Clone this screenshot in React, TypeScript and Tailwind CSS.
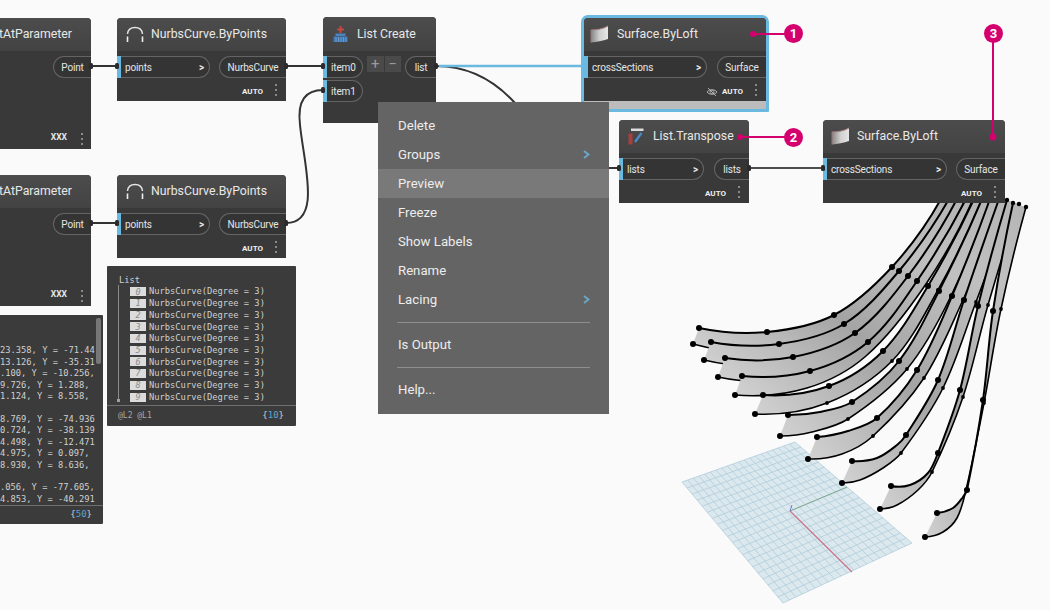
import React from "react";

type P = [number, number];

function tangents(pts: P[]) {
  const d = pts.slice(0, -1).map((p, i) => Math.hypot(pts[i + 1][0] - p[0], pts[i + 1][1] - p[1]));
  const m: P[] = pts.map((_, i) => {
    if (i === 0 || i === pts.length - 1) return [0, 0];
    const s = d[i - 1] + d[i];
    return [(pts[i + 1][0] - pts[i - 1][0]) / s, (pts[i + 1][1] - pts[i - 1][1]) / s];
  });
  const n = pts.length - 1;
  m[0] = [(2 * (pts[1][0] - pts[0][0])) / d[0] - m[1][0], (2 * (pts[1][1] - pts[0][1])) / d[0] - m[1][1]];
  m[n] = [(2 * (pts[n][0] - pts[n - 1][0])) / d[n - 1] - m[n - 1][0], (2 * (pts[n][1] - pts[n - 1][1])) / d[n - 1] - m[n - 1][1]];
  return { d, m };
}

function segs(pts: P[]): string {
  const { d, m } = tangents(pts);
  let s = "";
  for (let i = 0; i < pts.length - 1; i++) {
    const k = d[i] / 3;
    const a = pts[i];
    const b = pts[i + 1];
    s += ` C${(a[0] + m[i][0] * k).toFixed(1)},${(a[1] + m[i][1] * k).toFixed(1)} ${(b[0] - m[i + 1][0] * k).toFixed(1)},${(b[1] - m[i + 1][1] * k).toFixed(1)} ${b[0]},${b[1]}`;
  }
  return s;
}
const spline = (pts: P[]) => `M${pts[0][0]},${pts[0][1]}` + segs(pts);
const back = (pts: P[]) => {
  const r = [...pts].reverse();
  return `L${r[0][0]},${r[0][1]}` + segs(r);
};

const upper: P[][] = [
  [[699, 328], [767, 332], [834, 315], [892, 267], [941, 199]],
  [[711, 342], [779, 344], [844, 324], [899, 271], [949, 199]],
  [[725, 358], [793, 357], [855, 333], [908, 276], [957, 199]],
  [[742, 376], [810, 371], [868, 342], [917, 281], [966, 199]],
  [[763, 395], [829, 386], [883, 351], [928, 286], [974, 199]],
  [[788, 415], [852, 402], [899, 361], [939, 291], [982, 199]],
  [[817, 437], [877, 418], [917, 370], [952, 296], [990, 199]],
  [[852, 461], [906, 435], [938, 380], [964, 300], [999, 199]],
  [[891, 486], [938, 453], [960, 390], [978, 306], [1007, 200]],
  [[937, 513], [967, 490], [983, 400], [993, 311], [1013, 203]],
];
const lower: P[][] = [
  [[693, 344], [765, 352], [835, 336], [898, 282], [950, 197]],
  [[704, 360], [778, 365], [850, 344], [906, 286], [958, 197]],
  [[718, 377], [795, 379], [865, 352], [917, 292], [966, 197]],
  [[735, 395], [807, 388], [866, 356], [926, 284], [974, 197]],
  [[755, 414], [827, 403], [892, 361], [938, 290], [983, 197]],
  [[780, 436], [848, 419], [907, 369], [951, 296], [991, 197]],
  [[808, 459], [873, 436], [924, 378], [963, 300], [1007, 200]],
  [[842, 483], [901, 453], [943, 388], [976, 302], [1013, 203]],
  [[880, 509], [932, 472], [963, 397], [988, 305], [1019, 204]],
  [[925, 537], [966, 490], [984, 403], [1001, 309], [1026, 207]],
];
const upperBend: Record<number, P[]> = {
  5: [[820, 412]],
  6: [[848, 431]],
  7: [[877, 458], [897, 445]],
  8: [[910, 485], [928, 473]],
  9: [[953, 508], [963, 497]],
};
const lowerBend: Record<number, P[]> = {
  5: [[812, 432]],
  6: [[842, 454]],
  7: [[860, 480], [883, 468]],
  8: [[897, 505], [918, 490]],
  9: [[943, 532], [957, 518]],
};
const path = (c: P[], bend?: P[]) => (bend ? [c[0], ...bend, ...c.slice(1)] : c);

const A: P = [795, 442];
const B: P = [682, 482];
const C: P = [783, 603];
const D: P = [912, 543];
const lerp = (a: P, b: P, t: number): P => [a[0] + (b[0] - a[0]) * t, a[1] + (b[1] - a[1]) * t];
const cells = Array.from({ length: 21 }, (_, i) => i / 20);

function LoftDrawing() {
  return (
    <svg className="absolute left-0 top-0" width="1050" height="610" viewBox="0 0 1050 610">
      <defs>
        <linearGradient id="rib" x1="0" y1="1" x2="1" y2="0">
          <stop offset="0" stopColor="#d2d2d2" />
          <stop offset="0.4" stopColor="#a4a4a4" />
          <stop offset="0.75" stopColor="#c0c0c0" />
          <stop offset="1" stopColor="#b4b4b4" />
        </linearGradient>
      </defs>
      <polygon points={[A, B, C, D].map((p) => p.join(",")).join(" ")} fill="#dbe8ee" />
      {cells.map((t) => {
        const a = lerp(A, B, t);
        const b = lerp(D, C, t);
        const c = lerp(A, D, t);
        const d = lerp(B, C, t);
        return (
          <g key={t} stroke="#b0cdda" strokeWidth="0.8">
            <line x1={a[0]} y1={a[1]} x2={b[0]} y2={b[1]} />
            <line x1={c[0]} y1={c[1]} x2={d[0]} y2={d[1]} />
          </g>
        );
      })}
      <line x1="790" y1="511" x2="847" y2="487" stroke="#7fa98c" strokeWidth="1" />
      <line x1="790" y1="511" x2="852" y2="572" stroke="#c9768c" strokeWidth="1.3" />
      <line x1="790" y1="511" x2="792" y2="505" stroke="#6f7fd0" strokeWidth="1" />
      {upper.map((u, i) => {
        const top = path(u, upperBend[i]);
        const bot = path(lower[i], lowerBend[i]);
        return (
          <g key={i}>
            <path d={spline(top) + " " + back(bot) + " Z"} fill="url(#rib)" />
            <path d={spline(bot)} fill="none" stroke="#000" strokeWidth="1.6" />
            <path d={spline(top)} fill="none" stroke="#000" strokeWidth="2" />
          </g>
        );
      })}
      {upper.map((u, i) =>
        u.slice(0, 4).map((p, j) => <circle key={`u${i}${j}`} cx={p[0]} cy={p[1]} r="3" fill="#000" />)
      )}
      {lower.map((u, i) =>
        u.slice(0, i < 4 ? 1 : 4).map((p, j) => <circle key={`l${i}${j}`} cx={p[0]} cy={p[1]} r={j === 0 ? 3 : 1.9} fill="#000" />)
      )}
      {[[1007, 200], [1013, 203], [1019, 204], [1026, 207]].map((p) => (
        <circle key={p[0]} cx={p[0]} cy={p[1]} r="2.2" fill="#000" />
      ))}
    </svg>
  );
}

function Wires() {
  const dark = "#333333";
  return (
    <svg className="absolute left-0 top-0" width="1050" height="610" viewBox="0 0 1050 610">
      <g fill="none" stroke={dark} strokeWidth="2">
        <path d="M91,66H117" />
        <path d="M286,66H323" />
        <path d="M91,223H117" />
        <path d="M286,223 C322,223 304,165 300,125 C297,100 306,90 323,90" />
        <path d="M436,66 C468,66 494,80 515,103" />
        <path d="M609,168H619" />
        <path d="M749,168H823" stroke="#4d4d4d" />
      </g>
      <path d="M439,66H582" stroke="#69b9e0" strokeWidth="2.4" fill="none" />
      <g fill="#2b2b2b">
        {[[91, 66], [117, 66], [286, 66], [323, 66], [91, 223], [117, 223], [286, 223], [323, 90], [436, 66], [619, 168], [749, 168], [823, 168]].map((p) => (
          <rect key={p.join()} x={p[0] - 2} y={p[1] - 3} width="4" height="6" rx="1.5" />
        ))}
      </g>
    </svg>
  );
}

function CurveIcon() {
  return (
    <svg width="18" height="18" viewBox="0 0 18 18" fill="none" className="shrink-0">
      <path d="M1.5 8 C2 3 5 1.5 9 1.5 C13 1.5 16 3 16.5 8" stroke="#e4e4e4" strokeWidth="1.4" />
      <path d="M1.5 10.5V16" stroke="#eeeeee" strokeWidth="1.6" />
      <path d="M16.5 10.5V16" stroke="#eeeeee" strokeWidth="1.6" />
    </svg>
  );
}

function SurfaceIcon({ id }: { id: string }) {
  return (
    <svg width="20" height="19" viewBox="0 0 20 19" className="shrink-0">
      <defs>
        <linearGradient id={id} x1="0" y1="0" x2="1" y2="0">
          <stop offset="0" stopColor="#858585" />
          <stop offset="0.5" stopColor="#cfcfcf" />
          <stop offset="1" stopColor="#e6e6e6" />
        </linearGradient>
      </defs>
      <path d="M1 5 C6 5 13 4 18 1 V14 C13 16 6 17 1 17.5 Z" fill={`url(#${id})`} />
      <path d="M1 5 C6 5 13 4 18 1" stroke="#a88080" strokeWidth="1" fill="none" />
      <path d="M1 5 V17.5" stroke="#9a7474" strokeWidth="1" />
    </svg>
  );
}

function ListCreateIcon() {
  return (
    <svg width="15" height="18" viewBox="0 0 15 18" className="shrink-0">
      <path d="M7.5 1V8" stroke="#c8473f" strokeWidth="2" />
      <path d="M4 4.5H11" stroke="#c8473f" strokeWidth="2" />
      <rect x="2.5" y="8.5" width="10" height="2.5" fill="#4b84bf" />
      <rect x="0.5" y="11.5" width="14" height="5.5" fill="#3f78b5" />
      <path d="M3 12V17M5.5 12V17M8 12V17M10.5 12V17M13 12V17" stroke="#86b0d8" strokeWidth="0.6" />
    </svg>
  );
}

function TransposeIcon() {
  return (
    <svg width="16" height="17" viewBox="0 0 16 17" className="shrink-0">
      <rect x="0.5" y="5.5" width="4" height="11" fill="#a8403e" />
      <rect x="3" y="0.5" width="12.5" height="2.5" fill="#dcdcdc" />
      <path d="M13.5 5 L7 14" stroke="#4d8cc8" strokeWidth="2.2" />
    </svg>
  );
}

function Dots() {
  return (
    <div className="flex flex-col gap-[3px]">
      <span className="block h-[2px] w-[2px] bg-[#8a8a8a]" />
      <span className="block h-[2px] w-[2px] bg-[#8a8a8a]" />
      <span className="block h-[2px] w-[2px] bg-[#8a8a8a]" />
    </div>
  );
}

function InPort({ label, width }: { label: string; width: string }) {
  return (
    <div className={`flex h-[22px] ${width}`}>
      <div className="w-[4px] shrink-0 bg-[#69b9e0]" />
      <div className="flex flex-1 items-center justify-between rounded-r-[11px] border border-l-0 border-[#646464] bg-[#343434] pl-[4px] pr-[5px] text-[10px] tracking-[-0.15px] text-[#e6e6e6]">
        <span>{label}</span>
        <span className="text-[10px] font-bold">&gt;</span>
      </div>
    </div>
  );
}

function OutPort({ label, width }: { label: string; width: string }) {
  return (
    <div className={`flex h-[22px] items-center justify-center rounded-l-[11px] border border-r-0 border-[#646464] bg-[#343434] text-[10px] tracking-[-0.15px] text-[#e6e6e6] ${width}`}>
      {label}
    </div>
  );
}

function Footer({ label, eye }: { label: string; eye?: boolean }) {
  return (
    <div className="flex flex-1 items-center justify-end pr-[9px] pt-[1px]">
      {eye && (
        <svg width="12" height="10" viewBox="0 0 12 10" fill="none" stroke="#b8b8b8" strokeWidth="0.9" className="mr-[4px] mt-[3px]">
          <path d="M1 5 C3 2 9 2 11 5 C9 8 3 8 1 5 Z" />
          <circle cx="6" cy="5" r="2" />
          <path d="M2 1 L10 9" />
        </svg>
      )}
      <span className="mr-[12px] mt-[3px] text-[8px] font-bold text-[#f0f0f0]">{label}</span>
      <Dots />
    </div>
  );
}

function NodeBox({
  cls,
  icon,
  title,
  headerCls,
  inner,
  foot,
}: {
  cls: string;
  icon?: React.ReactNode;
  title: string;
  headerCls: string;
  inner: React.ReactNode;
  foot: React.ReactNode;
}) {
  return (
    <div className={`flex flex-col overflow-hidden rounded-t-[4px] bg-[#393939] ${cls}`}>
      <div className={`flex h-[33px] shrink-0 items-center bg-gradient-to-b from-[#4c4c4c] to-[#434343] text-[12.3px] text-[#e8e8e8] ${headerCls}`}>
        {icon}
        <span className="whitespace-nowrap">{title}</span>
      </div>
      <div className="mt-[5px] flex shrink-0 justify-between">{inner}</div>
      {foot}
    </div>
  );
}

function LeftNode({ cls }: { cls: string }) {
  return (
    <NodeBox
      cls={`absolute left-[-60px] h-[131px] w-[151px] ${cls}`}
      title="PointAtParameter"
      headerCls="justify-end pr-[19px]"
      inner={
        <div className="ml-auto">
          <OutPort label="Point" width="w-[38px]" />
        </div>
      }
      foot={
        <div className="flex flex-1 items-end justify-end pb-[4px] pr-[8px]">
          <span className="mb-[1px] mr-[14px] text-[8.5px] font-bold text-[#e6e6e6]">XXX</span>
          <Dots />
        </div>
      }
    />
  );
}

function NurbsNode({ cls }: { cls: string }) {
  return (
    <NodeBox
      cls={`absolute left-[117px] h-[83px] w-[169px] ${cls}`}
      icon={<span className="ml-[9px] mr-[7px]"><CurveIcon /></span>}
      title="NurbsCurve.ByPoints"
      headerCls=""
      inner={
        <>
          <InPort label="points" width="w-[93px]" />
          <OutPort label="NurbsCurve" width="w-[67px]" />
        </>
      }
      foot={<Footer label="AUTO" />}
    />
  );
}

function Menu() {
  const items: [string, boolean, boolean][] = [
    ["Delete", false, false],
    ["Groups", true, false],
    ["Preview", false, true],
    ["Freeze", false, false],
    ["Show Labels", false, false],
    ["Rename", false, false],
    ["Lacing", true, false],
  ];
  return (
    <div className="absolute left-[378px] top-[102px] flex h-[312px] w-[231px] flex-col bg-[#646464] pt-[9px] text-[13.2px] text-[#ededed]">
      {items.map(([t, sub, hi]) => (
        <div key={t} className={`flex h-[29px] shrink-0 items-center justify-between pl-[20px] pr-[19px] ${hi ? "bg-[#797979]" : ""}`}>
          <span>{t}</span>
          {sub && (
            <svg width="7" height="9" viewBox="0 0 7 9" fill="none" stroke="#6aa9cc" strokeWidth="1.8">
              <path d="M1 1 L5.5 4.5 L1 8" />
            </svg>
          )}
        </div>
      ))}
      <div className="mx-[19px] mt-[8px] h-px bg-[#8e8e8e]" />
      <div className="mt-[7px] flex h-[29px] items-center pl-[20px]">Is Output</div>
      <div className="mx-[19px] mt-[8px] h-px bg-[#8e8e8e]" />
      <div className="mt-[7px] flex h-[29px] items-center pl-[20px]">Help...</div>
    </div>
  );
}

const mono = "font-['DejaVu_Sans_Mono','Liberation_Mono',monospace]";

function ListPreview() {
  const idx = ["0", "1", "2", "3", "4", "5", "6", "7", "8", "9"];
  return (
    <div className={`absolute left-[107px] top-[266px] flex h-[160px] w-[189px] flex-col rounded-[1px] bg-[#3b3b3b] text-[8.75px] text-[#d0d0d0] ${mono}`}>
      <div className="relative flex-1 pl-[12px] pt-[9px]">
        <div className="h-[11px] leading-[11px]">List</div>
        <div className="absolute left-[11px] top-[19px] h-[116px] w-px bg-[#8a8a8a]" />
        <div className="absolute left-[10px] top-[133px] h-[3px] w-[3px] bg-[#a0a0a0]" />
        <div className="flex flex-col pl-[11px]">
          {idx.map((n) => (
            <div key={n} className="flex h-[11.7px] items-center">
              <span className="mr-[3px] flex h-[9px] w-[16px] items-center justify-center bg-[#dcdcdc] text-[8.5px] italic leading-none text-[#8a8a8a]">{n}</span>
              <span className="leading-none">NurbsCurve(Degree = 3)</span>
            </div>
          ))}
        </div>
      </div>
      <div className="flex h-[21px] items-center justify-between border-t border-[#6f6f6f] pl-[11px] pr-[12px] text-[8px] text-[#a8a8a8]">
        <span>@L2 @L1</span>
        <span className="text-[9px] text-[#cfcfcf]">{"{"}<span className="text-[#5aa6d6]">10</span>{"}"}</span>
      </div>
    </div>
  );
}

function PointsPreview() {
  const groups = [
    ["23.358, Y = -71.448, Z", "13.126, Y = -35.310, Z", ".100, Y = -10.256, Z", "9.726, Y = 1.288, Z", "1.124, Y = 8.558, Z"],
    ["8.769, Y = -74.936,", "0.724, Y = -38.139,", "4.498, Y = -12.471,", "4.975, Y = 0.097, Z", "8.930, Y = 8.636, Z"],
    [".056, Y = -77.605,", "4.853, Y = -40.291,"],
  ];
  return (
    <div className={`absolute left-0 top-[315px] flex h-[209px] w-[103px] flex-col rounded-r-[1px] bg-[#3b3b3b] text-[8.75px] text-[#d0d0d0] ${mono}`}>
      <div className="absolute right-[2px] top-[3px] h-[46px] w-[5px] rounded-[2px] bg-[#777777]" />
      <div className="flex h-[190px] flex-col gap-[12px] overflow-hidden pt-[30px]">
        {groups.map((g, i) => (
          <div key={i} className="flex w-[95px] flex-col overflow-hidden">
            {g.map((l) => (
              <div key={l} className="h-[11.5px] whitespace-pre leading-[11.5px]">{l}</div>
            ))}
          </div>
        ))}
      </div>
      <div className="flex h-[19px] items-center justify-end border-t border-[#6f6f6f] pr-[11px] text-[9px] text-[#cfcfcf]">
        <span>{"{"}<span className="text-[#5aa6d6]">50</span>{"}"}</span>
      </div>
    </div>
  );
}

function Callouts() {
  const pink = "#d4006e";
  return (
    <>
      <svg className="absolute left-0 top-0" width="1050" height="610" viewBox="0 0 1050 610">
        <g stroke={pink} strokeWidth="2" fill={pink}>
          <path d="M753,34H790" />
          <circle cx="753" cy="34" r="3" stroke="none" />
          <path d="M740,137H790" />
          <circle cx="740" cy="137" r="3" stroke="none" />
          <path d="M993,34V137" />
          <circle cx="993" cy="137" r="3.5" stroke="none" />
        </g>
      </svg>
      {[
        ["1", "left-[784px] top-[24px]"],
        ["2", "left-[784px] top-[128px]"],
        ["3", "left-[984px] top-[24px]"],
      ].map(([n, pos]) => (
        <div key={n} className={`absolute flex h-[19px] w-[19px] items-center justify-center rounded-full bg-[#d4006e] text-[13px] font-bold leading-none text-white ${pos}`}>
          {n}
        </div>
      ))}
    </>
  );
}

function InPortSmall({ label }: { label: string }) {
  return (
    <div className="flex h-[22px] w-[40px]">
      <div className="w-[4px] shrink-0 bg-[#69b9e0]" />
      <div className="flex flex-1 items-center rounded-r-[11px] border border-l-0 border-[#646464] bg-[#343434] pl-[4px] text-[10px] tracking-[-0.15px] text-[#e6e6e6]">
        {label}
      </div>
    </div>
  );
}

export default function App() {
  return (
    <div className="relative h-[610px] w-[1050px] overflow-hidden bg-[#fafafa] font-['Roboto','Open_Sans',sans-serif]">
      <LoftDrawing />

      <LeftNode cls="top-[18px]" />
      <LeftNode cls="top-[175px]" />
      <NurbsNode cls="top-[18px]" />
      <NurbsNode cls="top-[175px]" />

      <div className="absolute left-[323px] top-[17px] flex h-[106px] w-[113px] flex-col rounded-t-[4px] bg-[#393939]">
        <div className="flex h-[34px] shrink-0 items-center rounded-t-[4px] bg-gradient-to-b from-[#4c4c4c] to-[#434343] pl-[10px] text-[12.3px] text-[#e8e8e8]">
          <span className="mr-[9px]"><ListCreateIcon /></span>
          <span>List Create</span>
        </div>
        <div className="mt-[5px] flex justify-between">
          <div className="flex flex-col gap-[2px]">
            <div className="flex items-start gap-[4px]">
              <InPortSmall label="item0" />
              <div className="flex h-[16px] w-[34px] text-[15px] leading-none text-[#9a9a9a]">
                <span className="flex flex-1 items-center justify-center bg-[#4a4a4a]">+</span>
                <span className="ml-px flex flex-1 items-center justify-center bg-[#4a4a4a]">−</span>
              </div>
            </div>
            <InPortSmall label="item1" />
          </div>
          <OutPort label="list" width="w-[31px]" />
        </div>
      </div>

      <div className="absolute left-[581px] top-[15px] h-[97px] w-[188px] rounded-t-[7px] rounded-b-[1px] border-[3px] border-[#69b9e0] bg-[#bcbcbc]">
        <NodeBox
          cls="h-[83px] w-[182px]"
          icon={<span className="ml-[6px] mr-[7px]"><SurfaceIcon id="srfa" /></span>}
          title="Surface.ByLoft"
          headerCls=""
          inner={
            <>
              <InPort label="crossSections" width="w-[123px]" />
              <OutPort label="Surface" width="w-[49px]" />
            </>
          }
          foot={<Footer label="AUTO" eye />}
        />
      </div>

      <NodeBox
        cls="absolute left-[619px] top-[120px] h-[83px] w-[130px]"
        icon={<span className="ml-[9px] mr-[9px]"><TransposeIcon /></span>}
        title="List.Transpose"
        headerCls=""
        inner={
          <>
            <InPort label="lists" width="w-[85px]" />
            <OutPort label="lists" width="w-[35px]" />
          </>
        }
        foot={<Footer label="AUTO" />}
      />

      <NodeBox
        cls="absolute left-[823px] top-[120px] h-[83px] w-[182px]"
        icon={<span className="ml-[8px] mr-[6px]"><SurfaceIcon id="srfb" /></span>}
        title="Surface.ByLoft"
        headerCls=""
        inner={
          <>
            <InPort label="crossSections" width="w-[124px]" />
            <OutPort label="Surface" width="w-[49px]" />
          </>
        }
        foot={<Footer label="AUTO" />}
      />

      <ListPreview />
      <PointsPreview />
      <Wires />
      <Menu />
      <Callouts />
    </div>
  );
}
